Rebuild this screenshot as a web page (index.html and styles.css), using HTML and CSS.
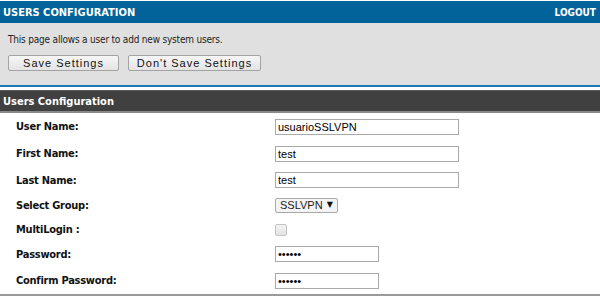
FILE: index.html
```html
<!DOCTYPE html>
<html lang="en">
<head>
    <meta charset="UTF-8">
    <title>Users Configuration</title>
    <link rel="stylesheet" href="styles.css">
</head>
<body>
    <div class="page-head">
        <span class="page-title">USERS CONFIGURATION</span>
        <a class="logout" href="#">LOGOUT</a>
    </div>

    <div class="intro">
        <p>This page allows a user to add new system users.</p>
        <div class="actions">
            <button class="btn btn-save">Save Settings</button>
            <button class="btn btn-cancel">Don't Save Settings</button>
        </div>
    </div>

    <div class="section">
        <div class="section-title">Users Configuration</div>
        <div class="form">
            <label class="form-label">User Name:</label>
            <div class="form-field"><input class="txt txt-long" type="text" value="usuarioSSLVPN"></div>

            <label class="form-label">First Name:</label>
            <div class="form-field"><input class="txt txt-long" type="text" value="test"></div>

            <label class="form-label">Last Name:</label>
            <div class="form-field"><input class="txt txt-long" type="text" value="test"></div>

            <label class="form-label">Select Group:</label>
            <div class="form-field">
                <span class="select-wrap">
                    <select class="sel"><option>SSLVPN</option></select>
                </span>
            </div>

            <label class="form-label">MultiLogin :</label>
            <div class="form-field"><span class="chk"></span></div>

            <label class="form-label">Password:</label>
            <div class="form-field"><input class="txt txt-short" type="password" value="secret"></div>

            <label class="form-label">Confirm Password:</label>
            <div class="form-field"><input class="txt txt-short" type="password" value="secret"></div>
        </div>
    </div>
</body>
</html>
```

FILE: styles.css
```css
body {
    margin: 0;
    padding-top: 1px;
    font-family: "DejaVu Sans Condensed", "DejaVu Sans", sans-serif;
    background-color: #fff;
}
.page-head {
    background-color: #02639a;
    height: 22px;
    display: flex;
    align-items: center;
    justify-content: space-between;
    padding: 0 4px 0 3px;
}
.page-title {
    color: #fff;
    font-size: 11px;
    font-weight: bold;
}
.logout {
    color: #fff;
    font-size: 10px;
    font-weight: bold;
    text-decoration: none;
}
.intro {
    background-color: #e0e0e0;
    height: 64px;
    padding: 0 8px;
    border-bottom: 2px solid #1879b6;
    box-sizing: border-box;
}
.intro p {
    margin: 0;
    padding-top: 11px;
    font-size: 10px;
    letter-spacing: -0.2px;
    color: #222;
    height: 21px;
}
.actions {
    display: flex;
    gap: 9px;
}
.btn {
    font-family: "Liberation Sans", Arial, sans-serif;
    font-size: 11px;
    letter-spacing: 1px;
    color: #111;
    background: linear-gradient(#f6f6f6, #e4e4e4);
    border: 1px solid #a3a3a3;
    border-radius: 2px;
    height: 16px;
    padding: 0;
}
.btn-save {
    width: 111px;
}
.btn-cancel {
    width: 133px;
}
.section {
    margin-top: 3px;
    border-bottom: 2px solid #9a9a9a;
}
.section-title {
    background-color: #404040;
    border-top: 1px solid #5a5a5a;
    border-bottom: 2px solid #8a8a8a;
    height: 20px;
    line-height: 21px;
    padding-left: 3px;
    color: #fff;
    font-size: 11px;
    font-weight: bold;
}
.form {
    display: grid;
    grid-template-columns: 259px 1fr;
    grid-template-rows: 27px 27px 26px 25px 23px 26px 27px;
    padding-left: 16px;
}
.form-label {
    display: flex;
    align-items: center;
    font-size: 11px;
    font-weight: bold;
    letter-spacing: -0.25px;
    color: #111;
}
.form-field {
    display: flex;
    align-items: center;
}
.txt {
    font-family: "Liberation Sans", Arial, sans-serif;
    font-size: 11px;
    color: #000;
    height: 16px;
    box-sizing: border-box;
    border: 1px solid #a9a9a9;
    padding: 0 2px;
    margin: 0;
}
.txt-long {
    width: 184px;
}
.txt-short {
    width: 104px;
}
.select-wrap {
    position: relative;
    display: inline-block;
    height: 15px;
}
.select-wrap::after {
    content: "\25BC";
    position: absolute;
    right: 5px;
    top: 2px;
    font-family: "DejaVu Sans", sans-serif;
    font-size: 8px;
    color: #111;
    pointer-events: none;
}
.sel {
    appearance: none;
    -webkit-appearance: none;
    display: block;
    font-family: "Liberation Sans", Arial, sans-serif;
    font-size: 11px;
    color: #222;
    width: 63px;
    height: 15px;
    border: 1px solid #a9a9a9;
    border-radius: 2px;
    background: #f4f4f4;
    padding: 0 0 0 4px;
    margin: 0;
    line-height: 13px;
}
.chk {
    width: 10px;
    height: 10px;
    border: 1px solid #c4c4c4;
    border-radius: 2px;
    background: linear-gradient(#f3f3f3, #e3e3e3);
}
```
